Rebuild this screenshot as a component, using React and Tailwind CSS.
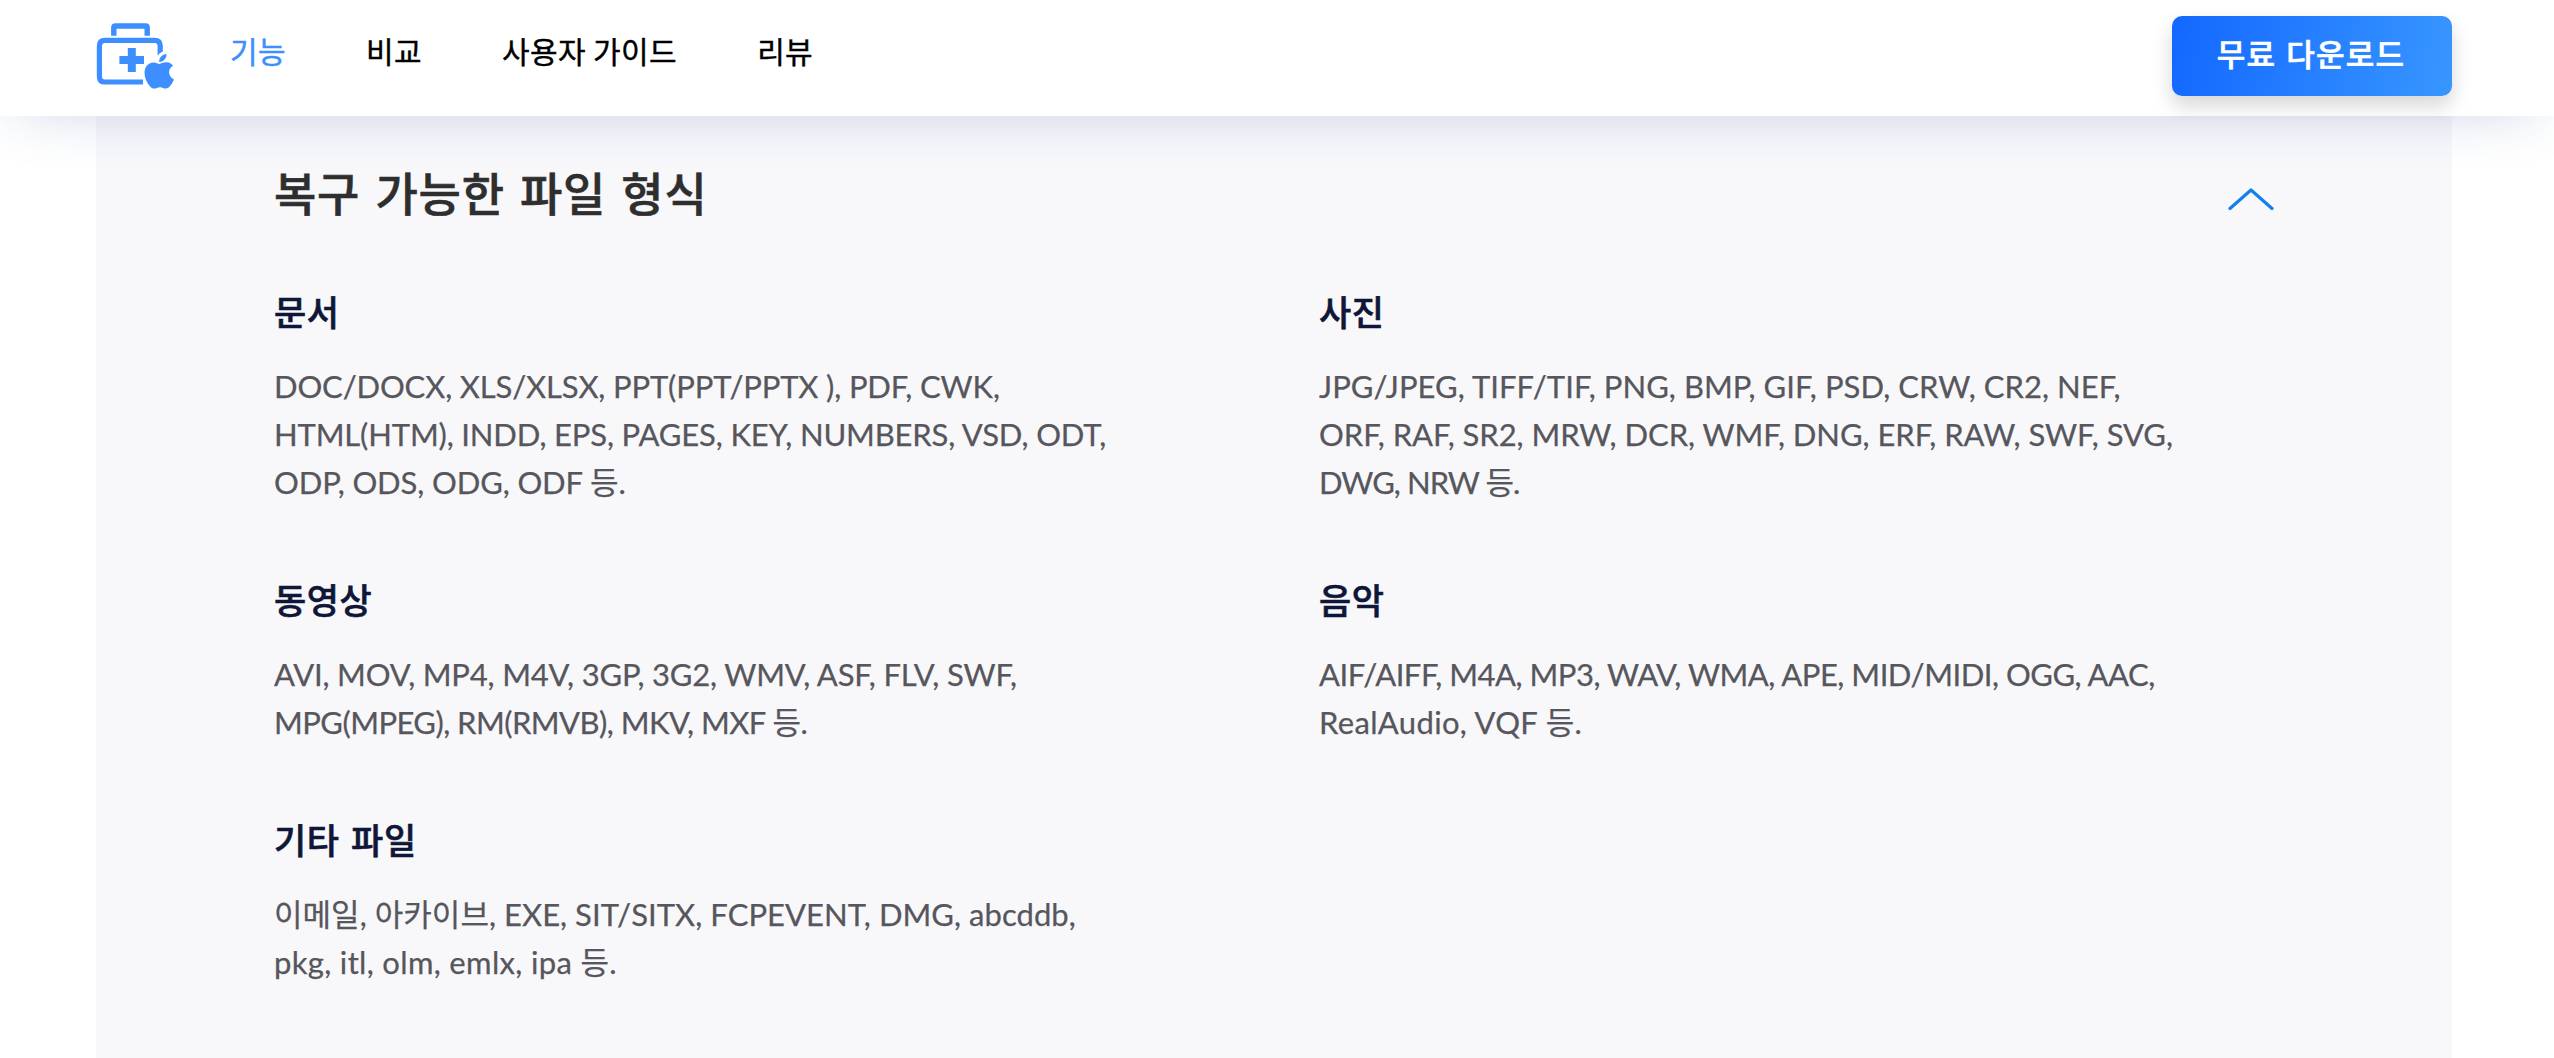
import React from 'react';

const navItems = [
  { label: '기능', active: true },
  { label: '비교' },
  { label: '사용자 가이드' },
  { label: '리뷰' },
];

const formats = [
  {
    title: '문서',
    lines: [
      { text: 'DOC/DOCX, XLS/XLSX, PPT(PPT/PPTX ), PDF, CWK,', tracking: 'tracking-[-0.15px]' },
      { text: 'HTML(HTM), INDD, EPS, PAGES, KEY, NUMBERS, VSD, ODT,', tracking: 'tracking-[-0.15px]' },
      { text: 'ODP, ODS, ODG, ODF 등.', tracking: 'tracking-[-0.12px]' },
    ],
  },
  {
    title: '사진',
    lines: [
      { text: 'JPG/JPEG, TIFF/TIF, PNG, BMP, GIF, PSD, CRW, CR2, NEF,', tracking: 'tracking-[0.05px]' },
      { text: 'ORF, RAF, SR2, MRW, DCR, WMF, DNG, ERF, RAW, SWF, SVG,', tracking: 'tracking-[-0.05px]' },
      { text: 'DWG, NRW 등.', tracking: 'tracking-[-0.95px]' },
    ],
  },
  {
    title: '동영상',
    lines: [
      { text: 'AVI, MOV, MP4, M4V, 3GP, 3G2, WMV, ASF, FLV, SWF,', tracking: 'tracking-[-0.18px]' },
      { text: 'MPG(MPEG), RM(RMVB), MKV, MXF 등.', tracking: 'tracking-[-0.54px]' },
    ],
  },
  {
    title: '음악',
    lines: [
      { text: 'AIF/AIFF, M4A, MP3, WAV, WMA, APE, MID/MIDI, OGG, AAC,', tracking: 'tracking-[-0.48px]' },
      { text: 'RealAudio, VQF 등.', tracking: 'tracking-[0.35px]' },
    ],
  },
  {
    title: '기타 파일',
    lines: [
      { text: '이메일, 아카이브, EXE, SIT/SITX, FCPEVENT, DMG, abcddb,', tracking: 'tracking-[0.04px]' },
      { text: 'pkg, itl, olm, emlx, ipa 등.', tracking: 'tracking-[0.33px]' },
    ],
  },
];

// First-aid case with the apple on its lower right corner
const Logo = () => (
  <svg className="w-[78px] h-[66px]" viewBox="96 23 78 66" fill="none">
    <path d="M113.8 35.7V27.6Q113.8 26 115.4 26H145.6Q147.2 26 147.2 27.6V35.7" stroke="#3d8eff" strokeWidth="5.4" />
    <path d="M143 82H105Q99.4 82 99.4 76.4V46Q99.4 40.4 105 40.4H154.6Q160.2 40.4 160.2 46V50.5" stroke="#3d8eff" strokeWidth="5.2" />
    <path d="M157.6 50h5.2v1.5q-3.5 1.2-5.2 4.3z" fill="#3d8eff" />
    <path d="M127.8 48h8v8h8.2v8h-8.2v8h-8v-8h-8.4v-8h8.4z" fill="#3d8eff" />
    <g transform="translate(141.2 54) scale(1.505 1.44)" fill="#3d8eff">
      <path d="M12.152 6.896c-.948 0-2.415-1.078-3.96-1.04-2.04.027-3.91 1.183-4.961 3.014-2.117 3.675-.546 9.103 1.519 12.09 1.013 1.454 2.208 3.09 3.792 3.039 1.52-.065 2.09-.987 3.935-.987 1.831 0 2.35.987 3.96.948 1.637-.026 2.676-1.48 3.676-2.948 1.156-1.688 1.636-3.325 1.662-3.415-.039-.013-3.182-1.221-3.22-4.857-.026-3.04 2.48-4.494 2.597-4.559-1.429-2.09-3.623-2.324-4.39-2.376-2-.156-3.675 1.09-4.61 1.09zM15.53 3.83c.843-1.012 1.4-2.427 1.245-3.83-1.207.052-2.662.805-3.532 1.818-.78.896-1.454 2.338-1.273 3.714 1.338.104 2.715-.688 3.559-1.701z" />
    </g>
  </svg>
);

const Header = () => (
  <header className="relative z-10 h-[116px] px-24 bg-white shadow-[0_10px_60px_-20px_rgba(60,90,160,0.32)]">
    <div className="w-[2356px] h-full flex items-start justify-between">
      <div className="flex items-start">
        <a href="#" className="mt-[23px]">
          <Logo />
        </a>
        <nav className="flex gap-20 ml-14 mt-[26px]">
          {navItems.map((item) => (
            <a
              key={item.label}
              href="#"
              className={`text-[30px] leading-[48px] tracking-[0.4px] whitespace-nowrap [-webkit-text-stroke:0.4px] ${item.active ? 'text-[#3d8eff]' : 'text-black'}`}
            >
              {item.label}
            </a>
          ))}
        </nav>
      </div>
      <button className="w-[280px] h-20 mt-4 pb-1.5 pr-0.5 rounded-[10px] bg-[linear-gradient(100deg,#1268ff,#3896ff)] shadow-[0_10px_20px_rgba(0,0,0,0.16)] text-white text-[31px] font-medium tracking-[1.2px] [word-spacing:2px] whitespace-nowrap [-webkit-text-stroke:0.6px]">
        무료 다운로드
      </button>
    </div>
  </header>
);

const App = () => {
  return (
    <div className="w-full h-[1058px] overflow-hidden bg-white font-['Noto_Sans_CJK_KR',sans-serif]">
      <Header />

      <main className="w-[2356px] h-[942px] ml-24 bg-[#f8f8fb] pt-[42px] pl-[178px] pr-[178px]">
        <div className="flex justify-between items-start mb-[60px]">
          <h2 className="text-[46px] leading-[66px] font-medium text-[#2e2e2e] tracking-[0.8px] [word-spacing:4px] [-webkit-text-stroke:0.6px]">복구 가능한 파일 형식</h2>
          <svg className="w-[46px] h-6 mt-[29px]" viewBox="0 0 46 24" fill="none">
            <path d="M2 21.5L23 3L44 21.5" stroke="#1480ee" strokeWidth="3.2" strokeLinecap="round" strokeLinejoin="round" />
          </svg>
        </div>

        {/* Format groups, two per row */}
        <div className="grid grid-cols-[1045px_900px]">
          {formats.map((group) => (
            <section key={group.title} className="mb-[66px]">
              <h3 className="mb-6 text-[35px] leading-[54px] font-medium text-[#0f1637] tracking-[0.6px] [word-spacing:3px] [-webkit-text-stroke:0.6px]">{group.title}</h3>
              <p className="text-[31px] leading-[48px] text-[#56565c] whitespace-nowrap [-webkit-text-stroke:0.25px] font-['Lato','Noto_Sans_CJK_KR',sans-serif]">
                {group.lines.map((line) => (
                  <span key={line.text} className={`block ${line.tracking}`}>
                    {line.text}
                  </span>
                ))}
              </p>
            </section>
          ))}
        </div>
      </main>
    </div>
  );
};

export default App;
